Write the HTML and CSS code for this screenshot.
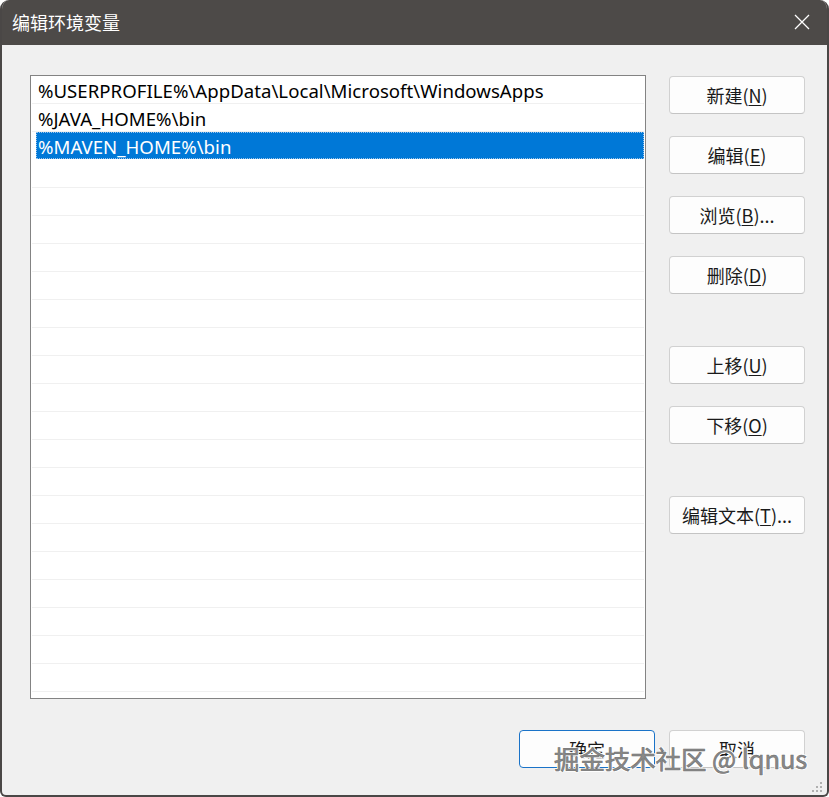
FILE: index.html
```html
<!DOCTYPE html>
<html lang="zh-CN">
<head>
<meta charset="utf-8">
<title>编辑环境变量</title>
<link rel="stylesheet" href="styles.css">
</head>
<body>
<div class="window">
  <div class="titlebar">
    <span class="title">编辑环境变量</span>
    <span class="close">
      <svg width="16" height="16" viewBox="0 0 16 16"><path d="M1 1 L15 15 M15 1 L1 15" stroke="#ffffff" stroke-width="1.3" fill="none"/></svg>
    </span>
  </div>
  <div class="content">
    <div class="main">
      <div class="listbox">
        <div class="row">%USERPROFILE%\AppData\Local\Microsoft\WindowsApps</div>
        <div class="row">%JAVA_HOME%\bin</div>
        <div class="row selected"><span class="sel">%MAVEN_HOME%\bin</span></div>
        <div class="row"></div><div class="row"></div><div class="row"></div><div class="row"></div>
        <div class="row"></div><div class="row"></div><div class="row"></div><div class="row"></div>
        <div class="row"></div><div class="row"></div><div class="row"></div><div class="row"></div>
        <div class="row"></div><div class="row"></div><div class="row"></div><div class="row"></div>
        <div class="row"></div><div class="row"></div><div class="row"></div>
      </div>
      <div class="side">
        <div class="group">
          <button class="btn">新建(<u>N</u>)</button>
          <button class="btn">编辑(<u>E</u>)</button>
          <button class="btn">浏览(<u>B</u>)...</button>
          <button class="btn">删除(<u>D</u>)</button>
        </div>
        <div class="group">
          <button class="btn">上移(<u>U</u>)</button>
          <button class="btn">下移(<u>O</u>)</button>
        </div>
        <div class="group">
          <button class="btn">编辑文本(<u>T</u>)...</button>
        </div>
      </div>
    </div>
    <div class="footer">
      <button class="btn primary">确定</button>
      <button class="btn">取消</button>
    </div>
  </div>
  <div class="grip">
    <svg width="14" height="12" viewBox="0 0 14 12">
      <rect x="10" y="0" width="2" height="2" fill="#b0b0b0"/>
      <rect x="6" y="4" width="2" height="2" fill="#b0b0b0"/>
      <rect x="10" y="4" width="2" height="2" fill="#b0b0b0"/>
      <rect x="2" y="8" width="2" height="2" fill="#b0b0b0"/>
      <rect x="6" y="8" width="2" height="2" fill="#b0b0b0"/>
      <rect x="10" y="8" width="2" height="2" fill="#b0b0b0"/>
    </svg>
  </div>
  <div class="watermark">掘金技术社区 @ lqnus</div>
</div>
</body>
</html>
```
FILE: styles.css
```css
* { box-sizing: border-box; }
html, body { margin: 0; padding: 0; background: #ffffff; }
body {
  width: 829px; height: 797px; overflow: hidden;
  font-family: "Noto Sans", "Noto Sans CJK SC", sans-serif;
}
.window {
  position: relative;
  width: 829px; height: 797px;
  background: #f0f0f0;
  border: 2px solid #4a4746;
  border-top: none;
  border-radius: 9px 9px 6px 6px;
  overflow: hidden;
  display: flex; flex-direction: column;
}
.titlebar {
  height: 45px; flex: none;
  background: #4d4a48;
  display: flex; align-items: center; justify-content: space-between;
  padding: 0 19px 0 12px;
  margin: 0 -2px;
}
.title {
  color: #ffffff; font-size: 18px;
  font-family: "Noto Sans CJK SC", sans-serif;
  margin-top: -2px;
}
.close { display: flex; margin-top: -2px; }
.content {
  flex: 1; display: flex; flex-direction: column;
  padding: 30px 0 0 28px;
}
.main { display: flex; gap: 23px; }
.listbox {
  width: 616px; height: 624px;
  background: #ffffff;
  border: 1px solid #838383;
  padding: 0 1px 0 1px;
  overflow: hidden;
}
.row {
  height: 28px;
  border-bottom: 1px solid #f0f0f0;
  font-size: 18.6px;
  line-height: 27px;
  padding-top: 1px;
  color: #000000;
  padding-left: 6px;
  white-space: nowrap;
  letter-spacing: 0.03px;
}
.row.selected { padding-left: 4px; padding-right: 0; padding-top: 0; border-bottom-color: #ffffff; }
.sel {
  display: block;
  height: 27px;
  line-height: 29px;
  background: #0078d7;
  color: #ffffff;
  padding-left: 2px;
  outline: 1px dotted #9bc4ea;
  outline-offset: -1px;
}
.side { display: flex; flex-direction: column; gap: 52px; padding-top: 1px; }
.group { display: flex; flex-direction: column; gap: 22px; }
.btn {
  width: 136px; height: 38px;
  background: #fdfdfd;
  border: 1px solid #d1d1d1;
  border-bottom-color: #c4c4c4;
  border-radius: 4px;
  font-family: "Noto Sans CJK SC", sans-serif;
  font-size: 18px;
  color: #1a1a1a;
  padding: 0;
  display: flex; align-items: center; justify-content: center;
}
.btn u { text-decoration-thickness: 1px; text-underline-offset: 2px; }
.footer {
  display: flex; justify-content: flex-end; gap: 14px;
  padding-right: 22px;
  margin-top: 31px;
}
.btn.primary { border: 1px solid #1a73c8; }
.grip { position: absolute; right: 3px; bottom: 1px; display: flex; }
.watermark {
  position: absolute; left: 552px; top: 739px;
  font-family: "Noto Sans CJK SC", sans-serif;
  font-size: 25.5px;
  color: #8a8a8a;
  -webkit-text-stroke: 0.6px #6f6f6f;
  text-shadow: 1px 1px 0 #ffffff, -1px -1px 0 #ffffff, 1px -1px 0 #ffffff, -1px 1px 0 #ffffff;
  white-space: nowrap;
  letter-spacing: -0.1px;
}
```
